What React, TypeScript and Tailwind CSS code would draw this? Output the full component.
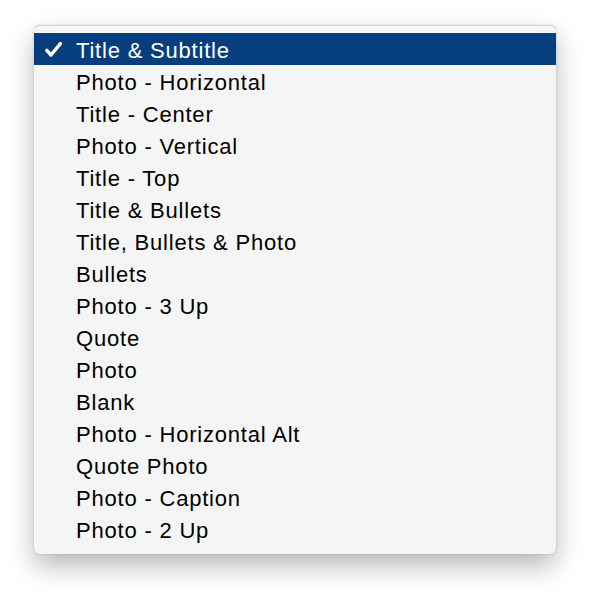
import React from 'react';

const layouts = [
  'Title & Subtitle',
  'Photo - Horizontal',
  'Title - Center',
  'Photo - Vertical',
  'Title - Top',
  'Title & Bullets',
  'Title, Bullets & Photo',
  'Bullets',
  'Photo - 3 Up',
  'Quote',
  'Photo',
  'Blank',
  'Photo - Horizontal Alt',
  'Quote Photo',
  'Photo - Caption',
  'Photo - 2 Up',
];

const App: React.FC = () => {
  const selected = 0;

  return (
    <div className="w-[590px] h-[596px] bg-white pt-[25px] pl-[34px] font-['Liberation_Sans',Arial,sans-serif]">
      {/* Menu */}
      <div className="w-[522px] h-[529px] bg-[#f5f5f5] rounded-[6px] border-t border-[#d8d8d8] pt-[7px] shadow-[0_12px_26px_rgba(0,0,0,0.28),0_0_2px_rgba(0,0,0,0.2)]">
        {layouts.map((name, i) => (
          <div
            key={name}
            className={`relative h-[32px] flex items-center pl-[42px] pt-[4px] text-[22px] tracking-[0.8px] leading-none ${
              i === selected ? 'bg-[#073f7e] text-white' : 'text-black'
            }`}
          >
            {i === selected && (
              <svg className="absolute left-[11px] top-[9px]" width="17" height="15" viewBox="0 0 17 15">
                <path d="M1.8 8.4 L6 13 L15.4 1.6" fill="none" stroke="white" strokeWidth="3.4" strokeLinejoin="round" strokeLinecap="round" />
              </svg>
            )}
            {name}
          </div>
        ))}
      </div>
    </div>
  );
};

export default App;
